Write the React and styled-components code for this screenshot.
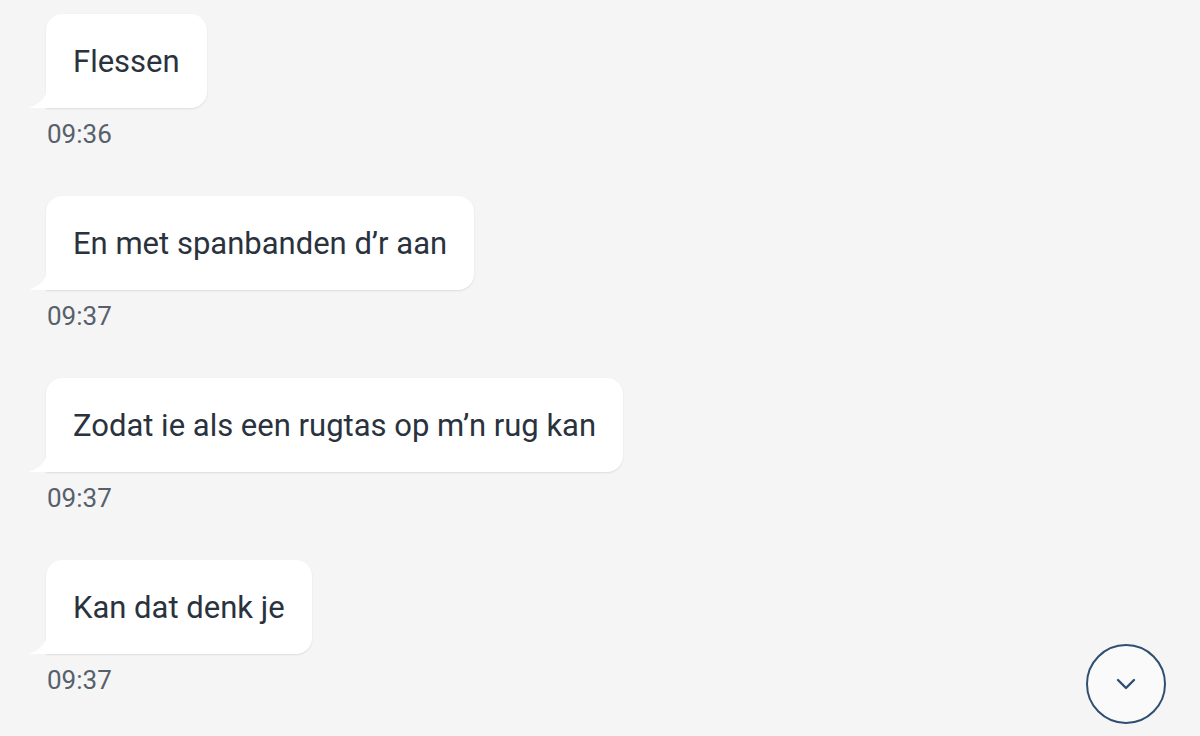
import React from "react";
import styled, { createGlobalStyle } from "styled-components";

const Global = createGlobalStyle`
  html, body {
    margin: 0;
    padding: 0;
    background: #f5f5f5;
    font-family: Roboto, "Noto Sans", sans-serif;
  }
`;

const Page = styled.div`
  width: 1200px;
  height: 736px;
  background: #f5f5f5;
  position: relative;
  overflow: hidden;
  box-sizing: border-box;
  padding: 14px 0 0 46px;
  display: flex;
  flex-direction: column;
  gap: 46px;
`;

const Message = styled.div`
  display: flex;
  flex-direction: column;
  align-items: flex-start;
`;

const Bubble = styled.div`
  position: relative;
  background: #ffffff;
  border-radius: 16px 16px 16px 0;
  padding: 0 27px 0 27px;
  height: 94px;
  display: flex;
  align-items: center;
  font-size: 31px;
  color: #2a323d;
  box-shadow: 0 1px 2px rgba(0, 0, 0, 0.1);

  &::before {
    content: "";
    position: absolute;
    left: -18px;
    bottom: 0;
    width: 19px;
    height: 20px;
    background: #ffffff;
    clip-path: path("M19 0 C19 10 10 17 0 20 L19 20 Z");
  }
`;

const Time = styled.div`
  margin-top: 10px;
  padding-left: 1px;
  font-size: 26px;
  line-height: 32px;
  color: #57606b;
`;

const ScrollButton = styled.button`
  position: absolute;
  left: 1086px;
  top: 644px;
  width: 80px;
  height: 80px;
  border-radius: 50%;
  border: 2px solid #2e4f6f;
  background: #fafafa;
  display: flex;
  align-items: center;
  justify-content: center;
  padding: 0;
  cursor: pointer;
`;

const messages = [
  { text: "Flessen", time: "09:36" },
  { text: "En met spanbanden d\u2019r aan", time: "09:37" },
  { text: "Zodat ie als een rugtas op m\u2019n rug kan", time: "09:37" },
  { text: "Kan dat denk je", time: "09:37" },
];

export default function App() {
  return (
    <>
      <Global />
      <Page>
        {messages.map((m, i) => (
          <Message key={i}>
            <Bubble>{m.text}</Bubble>
            <Time>{m.time}</Time>
          </Message>
        ))}
        <ScrollButton aria-label="Scroll down">
          <svg width="20" height="12" viewBox="0 0 20 12" fill="none">
            <path d="M2 2 L10 10 L18 2" stroke="#2e4f6f" strokeWidth="2.4" strokeLinecap="round" strokeLinejoin="round" />
          </svg>
        </ScrollButton>
      </Page>
    </>
  );
}
